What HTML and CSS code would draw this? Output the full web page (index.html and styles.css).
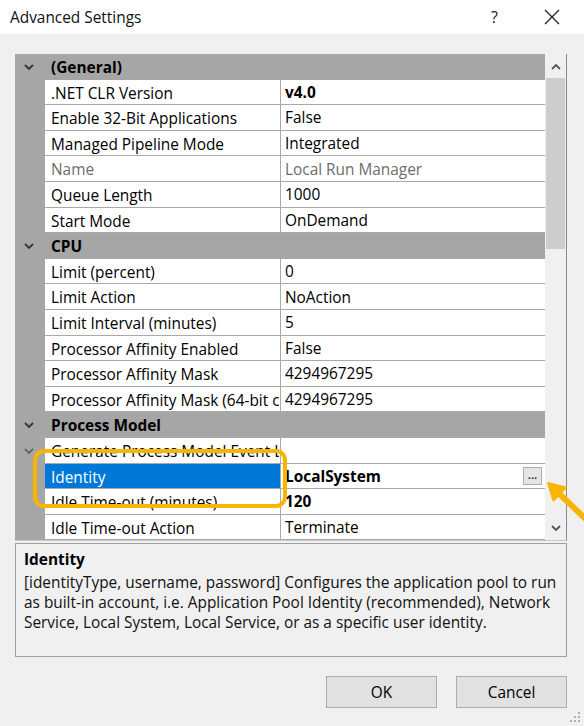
FILE: index.html
```html
<!DOCTYPE html>
<html>
<head>
<meta charset="utf-8">
<link rel="stylesheet" href="styles.css">
</head>
<body>
<div class="dialog">
  <div class="titlebar">
    <span class="title">Advanced Settings</span>
    <span class="help">?</span>
    <svg class="close" width="16" height="16" viewBox="0 0 16 16"><path d="M1 1 L15 15 M15 1 L1 15" stroke="#222" stroke-width="1.3" fill="none"/></svg>
  </div>
  <div class="content">
    <div class="grid">
      <div class="rows">
        <div class="row cat"><div class="gut"><svg width="10" height="8" viewBox="0 0 10 8"><path d="M1 2 L5 6 L9 2" stroke="#333" stroke-width="1.8" fill="none"/></svg></div><div class="catname">(General)</div></div>
        <div class="row"><div class="gut"></div><div class="name">.NET CLR Version</div><div class="val b">v4.0</div></div>
        <div class="row"><div class="gut"></div><div class="name">Enable 32-Bit Applications</div><div class="val">False</div></div>
        <div class="row"><div class="gut"></div><div class="name">Managed Pipeline Mode</div><div class="val">Integrated</div></div>
        <div class="row"><div class="gut"></div><div class="name dim">Name</div><div class="val dim">Local Run Manager</div></div>
        <div class="row"><div class="gut"></div><div class="name">Queue Length</div><div class="val">1000</div></div>
        <div class="row"><div class="gut"></div><div class="name">Start Mode</div><div class="val">OnDemand</div></div>
        <div class="row cat"><div class="gut"><svg width="10" height="8" viewBox="0 0 10 8"><path d="M1 2 L5 6 L9 2" stroke="#333" stroke-width="1.8" fill="none"/></svg></div><div class="catname">CPU</div></div>
        <div class="row"><div class="gut"></div><div class="name">Limit (percent)</div><div class="val">0</div></div>
        <div class="row"><div class="gut"></div><div class="name">Limit Action</div><div class="val">NoAction</div></div>
        <div class="row"><div class="gut"></div><div class="name">Limit Interval (minutes)</div><div class="val">5</div></div>
        <div class="row"><div class="gut"></div><div class="name">Processor Affinity Enabled</div><div class="val">False</div></div>
        <div class="row"><div class="gut"></div><div class="name">Processor Affinity Mask</div><div class="val">4294967295</div></div>
        <div class="row"><div class="gut"></div><div class="name"><span class="clip">Processor Affinity Mask (64-bit c</span></div><div class="val">4294967295</div></div>
        <div class="row cat"><div class="gut"><svg width="10" height="8" viewBox="0 0 10 8"><path d="M1 2 L5 6 L9 2" stroke="#333" stroke-width="1.8" fill="none"/></svg></div><div class="catname">Process Model</div></div>
        <div class="row"><div class="gut"><svg width="10" height="8" viewBox="0 0 10 8"><path d="M1 2 L5 6 L9 2" stroke="#555" stroke-width="1.5" fill="none"/></svg></div><div class="name"><span class="clip">Generate Process Model Event L</span></div><div class="val"></div></div>
        <div class="row"><div class="gut"></div><div class="name sel">Identity</div><div class="val b">LocalSystem<span class="dots">...</span></div></div>
        <div class="row"><div class="gut"></div><div class="name">Idle Time-out (minutes)</div><div class="val b">120</div></div>
        <div class="row"><div class="gut"></div><div class="name">Idle Time-out Action</div><div class="val">Terminate</div></div>
      </div>
      <div class="scroll">
        <div class="sbtn"><svg width="10" height="7" viewBox="0 0 10 7"><path d="M1 6 L5 2 L9 6" stroke="#555" stroke-width="1.8" fill="none"/></svg></div>
        <div class="thumb"></div>
        <div class="track"></div>
        <div class="sbtn"><svg width="10" height="7" viewBox="0 0 10 7"><path d="M1 1 L5 5 L9 1" stroke="#555" stroke-width="1.8" fill="none"/></svg></div>
      </div>
    </div>
    <div class="desc">
      <div class="dtitle">Identity</div>
      <div class="dtext">[identityType, username, password] Configures the application pool to run as built-in account, i.e. Application Pool Identity (recommended), Network Service, Local System, Local Service, or as a specific user identity.</div>
    </div>
    <div class="buttons">
      <div class="btn">OK</div>
      <div class="btn">Cancel</div>
    </div>
  </div>
  <svg class="grip" width="10" height="10" viewBox="0 0 10 10"><g fill="#b0b0b0"><rect x="8" y="0" width="2" height="2"/><rect x="4" y="4" width="2" height="2"/><rect x="8" y="4" width="2" height="2"/><rect x="0" y="8" width="2" height="2"/><rect x="4" y="8" width="2" height="2"/><rect x="8" y="8" width="2" height="2"/></g></svg>
  <div class="highlight"></div>
  <svg class="arrow" width="44" height="51" viewBox="0 0 44 51"><path d="M19 18.5 L50 48" stroke="#f7b500" stroke-width="6" fill="none"/><path d="M8 8 L13.4 25.5 L25.8 12.5 Z" fill="#f7b500" stroke="#f7b500" stroke-width="2" stroke-linejoin="round"/></svg>
</div>
</body>
</html>
```
FILE: styles.css
```css
* { box-sizing: border-box; }
html, body { margin: 0; padding: 0; }
body {
  width: 584px;
  height: 726px;
  overflow: hidden;
  background: #f0f0f0;
  font-family: "Open Sans", "Noto Sans", sans-serif;
  font-size: 15.4px;
  color: #000;
}
.dialog { position: relative; width: 584px; height: 726px; }
.titlebar {
  height: 34px;
  background: #fff;
  display: flex;
  align-items: center;
  padding-left: 10px;
}
.title { flex: 1; font-size: 15.4px; color: #111; }
.help { font-size: 16px; color: #222; margin-right: 46px; }
.close { margin-right: 24px; }
.content { padding: 20px 17px 0 15px; }
.grid {
  display: flex;
  height: 487px;
  border-right: 1px solid #8a8a8a;
  border-bottom: 1px solid #c8c8c8;
}
.rows { width: 530px; overflow: hidden; }
.row { display: flex; height: 25.6px; }
.gut {
  width: 30px;
  flex: none;
  background: #a6a6a6;
  display: flex;
  align-items: center;
  justify-content: center;
  padding-right: 2px;
}
.name, .val {
  background: #fff;
  border-bottom: 1px solid #a9a9a9;
  line-height: 24px;
  padding-top: 2px;
  white-space: nowrap;
  overflow: hidden;
}
.name { width: 236px; flex: none; padding-left: 6px; border-right: 1px solid #a9a9a9; }
.clip { display: block; overflow: hidden; width: 228px; }
.val { flex: 1; padding-left: 4px; display: flex; align-items: center; }
.b { font-weight: 700; }
.dim { color: #6d6d6d; }
.sel { background: #0078d7; color: #fff; }
.cat { background: #a6a6a6; }
.catname { padding-left: 6px; padding-top: 2px; font-weight: 700; line-height: 24px; }
.dots {
  margin-left: auto;
  margin-right: 3px;
  margin-top: -2px;
  width: 19px;
  height: 18px;
  border: 1px solid #adadad;
  background: #e5e5e5;
  font-size: 11px;
  font-weight: 700;
  line-height: 14px;
  text-align: center;
  color: #333;
}
.scroll {
  width: 21px;
  display: flex;
  flex-direction: column;
  background: #f0f0f0;
}
.sbtn { height: 24px; display: flex; align-items: center; justify-content: center; }
.thumb { height: 171px; background: #cdcdcd; margin: 0 1px 0 1px; }
.track { flex: 1; }
.desc {
  margin-top: 2px;
  height: 114px;
  border: 1px solid #a0a0a0;
  padding: 5px 6px 5px 8px;
}
.dtitle { font-weight: 700; line-height: 22px; }
.dtext { line-height: 20px; color: #111; padding-top: 2px; }
.buttons {
  display: flex;
  justify-content: flex-end;
  gap: 19px;
  margin-top: 19px;
}
.btn {
  width: 111px;
  height: 32px;
  background: #e1e1e1;
  border: 1px solid #adadad;
  display: flex;
  align-items: center;
  justify-content: center;
  font-size: 15.4px;
}
.grip { position: absolute; right: 4px; bottom: 4px; }
.highlight {
  position: absolute;
  left: 33px;
  top: 449px;
  width: 254px;
  height: 59px;
  border: 4px solid #f7b500;
  border-radius: 11px;
}
.arrow { position: absolute; left: 540px; top: 475px; }
```
